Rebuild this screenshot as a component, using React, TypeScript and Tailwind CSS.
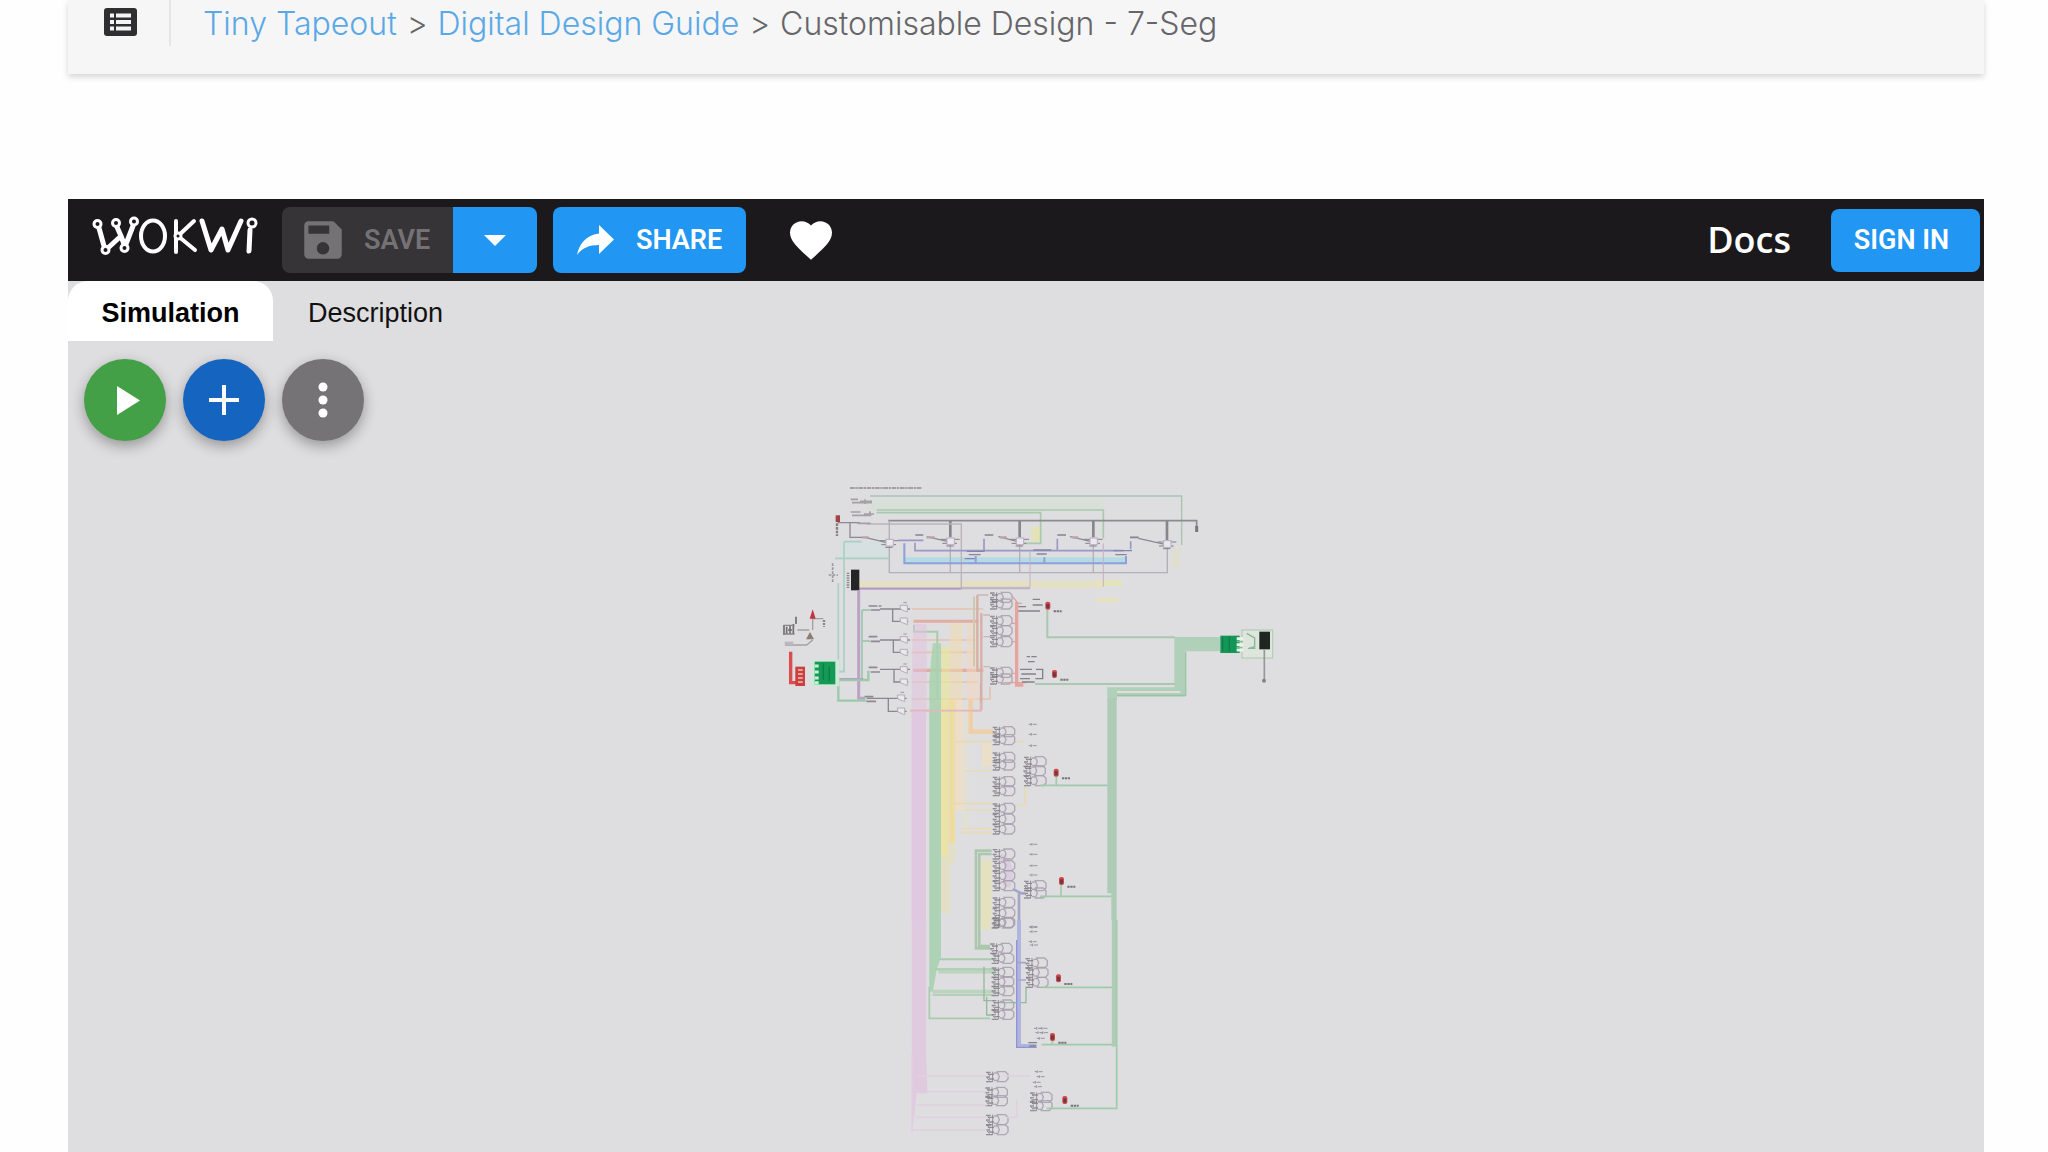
import React from 'react';

const INK = '#858189';
const LEAF = '#9fcbaa';

type Spot = [number, number];

function Gates({ spots }: { spots: Spot[] }) {
  return (
    <>
      {spots.map(([x, y]) => (
        <g key={`${x}-${y}`} transform={`translate(${x} ${y})`} fill="none" stroke={INK} strokeOpacity="0.85">
          <path d="M0 4h14M6 10h18M0 18h12M8 24h16M0 32h20" strokeWidth="4" />
          <path d="M20 2v30M5 6l6 8M3 20l7 9" strokeWidth="3" />
          <path d="M24 6h12M24 28h10M34 2h24l8 8v14l-8 8H34l6-15z" strokeWidth="4" stroke="#a79dae" />
        </g>
      ))}
    </>
  );
}

function Leds({ spots }: { spots: Spot[] }) {
  return (
    <>
      {spots.map(([x, y]) => (
        <g key={`${x}-${y}`}>
          <rect x={x - 7} y={y - 12} width="15" height="24" rx="6" fill="#d0484d" />
          <rect x={x - 4} y={y - 5} width="9" height="13" fill="#6f3a3c" />
          <path d={`M${x + 18} ${y + 17}h24`} stroke="#77757a" strokeWidth="6" strokeDasharray="7 2" />
        </g>
      ))}
    </>
  );
}

function Notes({ spots }: { spots: Spot[] }) {
  return (
    <>
      {spots.map(([x, y]) => (
        <path key={`${x}-${y}`} d={`M${x} ${y}h8m4 0h12M${x + 8} ${y - 4}v8`} stroke="#98959c" strokeWidth="3" fill="none" />
      ))}
    </>
  );
}

function Counter({ x, y }: { x: number; y: number }) {
  return (
    <g transform={`translate(${x} ${y})`} fill="none" stroke={INK} strokeWidth="3">
      <path d="M-28 -6h56M-24 6h44" />
      <rect x="-10" y="-10" width="22" height="20" fill="#ece7f0" stroke="#b7aebf" />
      <path d="M-12 14h22" />
    </g>
  );
}

function Circuit() {
  return (
    <svg className="h-[672px] w-[520px] shrink-0" viewBox="766 480 520 672" role="img" aria-label="Seven segment circuit diagram">
      <g transform="translate(770 480) scale(0.33333)" fill="none">
        {/* tinted bus backgrounds */}
        <path d="M290 60H1000V88H290z" fill="#d8dfd6" />
        <path d="M403 232H1068V250H403z" fill="#b4dbe5" />
        <path d="M210 185H358V235H210z" fill="#d6e0e0" />
        <path d="M265 302H1000V324H265z" fill="#e3e0c4" />
        <path d="M785 140H812V185H785z" fill="#e3e3b5" />
        <path d="M980 300h76v18h-76zM980 355h66v12h-66z" fill="#e4e3bb" />
        <path d="M1205 205h26v60h-26z" fill="#dfdfcf" />

        {/* register row */}
        <path d="M240 24H455" stroke="#8e8c90" strokeWidth="4" strokeDasharray="14 2 7 2" />
        <path d="M300 48H1235V195" stroke="#a9c5b0" strokeWidth="4" />
        <path d="M320 90H1000V175M320 98H812V190H765" stroke="#a8c9ae" strokeWidth="5" />
        <path d="M355 122H1280V148" stroke="#8b8a8f" strokeWidth="5" />
        <path d="M541 122V172M749 122V172M970 122V172M1191 122V180" stroke="#88868d" strokeWidth="8" />
        <path d="M1280 138v18" stroke="#7a787e" strokeWidth="9" />
        <path d="M358 122V278H1192V190M541 180V278M749 180V278M970 180V278" stroke="#b3b0b6" strokeWidth="4" />
        <path d="M290 132H574V326" stroke="#b9b4b8" strokeWidth="4" />
        <path d="M203 128H270M240 128V172H280M285 172l65 16M470 170l65 15M685 170l60 15M900 170l65 15M1105 175l80 18" stroke="#8c8991" strokeWidth="4" />
        <path d="M385 181H460M435 188V212H1060M642 176V212M862 176V212M1082 184V208" stroke="#9a98c6" strokeWidth="5" />
        <path d="M403 190V250H1068V228M617 228V250M823 232V250" stroke="#8f9fd8" strokeWidth="6" />
        <path d="M436 165h24M644 165h26M862 165h26M1080 172h26" stroke="#87848c" strokeWidth="5" />
        <path d="M590 214h54M596 224h36M790 210h54M800 222h30M1030 212h56M1036 224h34M584 236h30" stroke="#8884a8" strokeWidth="4" />
        <path d="M780 212V322H575M1000 190V320" stroke="#c3b2c4" strokeWidth="3" />
        <Counter x={358} y={188} />
        <Counter x={541} y={184} />
        <Counter x={749} y={184} />
        <Counter x={970} y={184} />
        <Counter x={1191} y={192} />
        <path d="M242 58h22m6 6h36M246 68h60M242 96h30m10 6h30M246 106h58M262 130h40M285 58v14M300 94v14" stroke="#a4a1a7" strokeWidth="5" />
        <path d="M470 172h24M690 172h20M905 172h20M276 172h20" stroke="#b8a3ac" strokeWidth="7" />
        <rect x="197" y="106" width="13" height="20" fill="#a24146" />
        <path d="M201 130v38" stroke="#827f85" strokeWidth="7" strokeDasharray="8 3" />

        {/* clock and chip */}
        <path d="M265 326H575" stroke="#b59ac6" strokeWidth="7" />
        <path d="M575 326H780" stroke="#c3b2c4" strokeWidth="4" />
        <path d="M358 235H195M222 185V575H205M275 185H222M205 310V575" stroke="#a9d0c3" strokeWidth="5" />
        <path d="M188 250v60M176 285h28" stroke="#9b989e" strokeWidth="5" strokeDasharray="8 4" />
        <rect x="243" y="269" width="25" height="62" fill="#242326" />
        <path d="M234 278v48" stroke="#8b888e" strokeWidth="8" strokeDasharray="4 3" />
        <path d="M266 330V655H285" stroke="#b9a3c6" strokeWidth="9" />
        <path d="M276 390V600M300 390H276M300 483H276" stroke="#a7c9b4" strokeWidth="6" />
        <path d="M205 600H295V572M205 600V662H290" stroke="#9ccaab" strokeWidth="7" />
        <path d="M205 596H280" stroke="#b3a3c0" strokeWidth="4" />

        {/* switches and input board */}
        <path d="M42 435v30M50 440v22M60 438v24M70 432v30M54 450h12M78 410v22" stroke="#716e72" strokeWidth="5" />
        <path d="M40 436h34M40 462h34" stroke="#8a878c" strokeWidth="4" />
        <path d="M82 450H118M128 410V450M128 416H160M45 495H110L128 480" stroke="#a5a0a4" strokeWidth="4" />
        <path d="M162 420v20" stroke="#88858a" strokeWidth="7" strokeDasharray="6 3" />
        <path d="M108 478l12-22 12 22z" fill="#8b7c74" />
        <path d="M128 388l9 28h-18z" fill="#c2353a" />
        <path d="M44 490h26" stroke="#bcb7bc" strokeWidth="10" />
        <path d="M62 515V608H78" stroke="#dc4b4e" strokeWidth="10" />
        <rect x="76" y="560" width="29" height="58" fill="#cc3f40" />
        <path d="M84 570h14M84 582h14M84 594h14M84 606h14" stroke="#f0c5ae" strokeWidth="5" />
        <rect x="124" y="539" width="84" height="80" fill="#cfe9d8" />
        <rect x="134" y="545" width="62" height="68" fill="#149a55" />
        <path d="M134 558h12M134 576h12M134 594h12M134 608h12" stroke="#c8f0d8" strokeWidth="9" />
        <path d="M160 550v50M178 560v45" stroke="#0b7f45" strokeWidth="4" />

        {/* input buffers */}
        <path d="M330 387H420M368 387V424H415M330 480H420M370 480V517H415M330 568H420M372 568V606H415M290 655H410M355 655V694H410" stroke="#8a878d" strokeWidth="4" />
        <path d="M296 378h26m4 0h8M302 390h28M296 470h26M302 484h28M296 562h26M302 576h28M284 650h26M290 664h28" stroke="#8c8990" strokeWidth="5" />
        <path d="M390 376h22v20l-20-8zM390 414h22v20l-20-8zM390 470h22v20l-20-8zM390 508h22v20l-20-8zM390 560h22v20l-20-8zM390 597h22v20l-20-8zM382 645h22v20l-20-8zM382 684h22v20l-20-8z" fill="#ebe8ec" stroke="#b3afb6" strokeWidth="3" />
        <path d="M400 368h10M400 462h10M400 552h10M392 637h10" stroke="#9b98a0" strokeWidth="3" />
        <path d="M425 387H640M425 480H620M425 517H620M425 606H625M425 657H660V620" stroke="#e4c2b0" strokeWidth="5" />
        <path d="M430 424H625" stroke="#e2ada2" strokeWidth="9" />
        <path d="M430 571H640" stroke="#e3a9a2" strokeWidth="10" />
        <path d="M425 692H632V610" stroke="#dfb1b9" strokeWidth="5" />
        <path d="M432 435V455H502V660" stroke="#a7ccad" strokeWidth="6" />

        {/* vertical buses, upper part */}
        <path d="M430 432H470V700H425V600z" fill="#e1c2dd" fillOpacity="0.55" />
        <path d="M488 490H513V700H478V600z" fill="#a9d2b0" fillOpacity="0.85" />
        <path d="M514 500H540V662H514z" fill="#e9e59f" fillOpacity="0.7" />
        <path d="M540 430H578V662H540z" fill="#f1dcad" fillOpacity="0.55" />
        <path d="M590 430H625V662H590z" fill="#f1d9c2" fillOpacity="0.6" />
        <path d="M622 345V575M634 400V690" stroke="#d6aea4" strokeWidth="7" />
        <path d="M612 350V560" stroke="#cfc9b0" strokeWidth="6" />
        <path d="M622 345H655M640 405H660M640 470H660M640 560H660" stroke="#cdb5b2" strokeWidth="4" />
        <Gates spots={[[660, 335], [660, 355], [660, 405], [660, 435], [660, 468], [660, 560], [660, 580]]} />
        <path d="M740 366V615H760" stroke="#e7a39e" strokeWidth="10" />
        <path d="M740 370H755M728 350L744 370M725 430H738M725 485H738M722 580H738M700 608H770" stroke="#d9a5a3" strokeWidth="4" />
        <path d="M745 380H768M745 393H810M788 358h22M788 375h30M750 568h36M754 582h44M750 596h30M756 606h38M798 568h20v28h-22M770 530h10m4 0h16M774 545h20" stroke={INK} strokeWidth="4" />
        <path d="M832 390V472H1215M795 612H1215" stroke="#a8c8b0" strokeWidth="6" />
        <Leds spots={[[833, 377], [853, 582]]} />

        {/* output bus */}
        <path d="M1350 471H1213V622H1012V662H1041V650H1247V514H1350z" fill="#b1d0b9" />
        <path d="M1041 636H1232" stroke="#dcdfdc" strokeWidth="6" />
        <path d="M1041 646H1247V516" stroke="#98c4a5" strokeWidth="4" />
        <g transform="translate(990 300)">
          <rect x="426" y="150" width="92" height="84" fill="#dde5dd" stroke="#b9cdbb" strokeWidth="4" />
          <rect x="361" y="167" width="58" height="52" fill="#159659" />
          <path d="M368 172v40M388 170v44" stroke="#0d7f47" strokeWidth="4" />
          <path d="M410 176h20M410 194h20M410 210h20" stroke="#e6f6ea" strokeWidth="9" />
          <path d="M410 185h18M410 203h16M440 160l24 14v26l-20 6M450 205h16" stroke="#88b793" strokeWidth="4" />
          <rect x="478" y="155" width="32" height="53" fill="#1f261f" />
          <path d="M493 208V298" stroke="#99979b" strokeWidth="5" />
          <circle cx="492" cy="302" r="6" fill="#858288" />
        </g>

        {/* decoder, middle part */}
        <g transform="translate(360 660)">
          <path d="M65 30H108V660H65z" fill="#e0c8e0" />
          <path d="M118 30H153V660H118z" fill="#aed2b5" />
          <path d="M153 0H174V470H153z" fill="#eae3a8" />
          <path d="M176 0H195V430H176z" fill="#eedd9c" />
          <path d="M198 0H216V330H198z" fill="#efddc6" />
          <path d="M153 470H180V640H153zM176 430H195V490H176z" fill="#e3dfc4" />
          <path d="M216 20H236V400H216z" fill="#e1dfd6" />
          <path d="M242 0V95H310" stroke="#efd0a6" strokeWidth="14" />
          <path d="M60 32H272V5" stroke="#e1b9bc" strokeWidth="5" />
          <path d="M275 130H305V200H275z" fill="#efe0bd" fillOpacity="0.7" />
          <path d="M200 125H305M225 213H305M180 310H305M225 330H305M215 398H305M215 386H305M375 125H405M375 315H405V255" stroke="#e6dbb4" strokeWidth="5" />
          <path d="M272 480H305V660H272z" fill="#e4e1c0" />
          <path d="M305 452H258V660M305 462H268V660" stroke="#acc7ae" strokeWidth="8" />
          <path d="M330 470q40 20 20 90" stroke="#d5bbdc" strokeWidth="22" strokeOpacity="0.45" />
          <Gates spots={[[308, 78], [308, 102], [308, 155], [308, 178], [308, 228], [308, 255], [308, 308], [308, 340], [308, 370], [308, 445], [308, 480], [308, 510], [308, 540], [308, 590], [308, 622], [308, 650]]} />
          <Gates spots={[[402, 168], [400, 195], [402, 225], [402, 540], [402, 562]]} />
          <Notes spots={[[416, 73], [416, 103], [416, 137], [418, 433], [418, 463], [418, 497], [418, 525], [418, 682]]} />
          <path d="M450 256H655M450 589H665M499 230V256M513 555V589" stroke={LEAF} strokeWidth="5" />
          <path d="M370 568L395 580H405M387 580V680" stroke="#a4a5c8" strokeWidth="8" />
          <Leds spots={[[498, 218], [514, 543]]} />
        </g>
        <path d="M1012 655H1040V1320H1024V1240H1012z" fill="#aeccb5" />

        {/* decoder, lower part */}
        <g transform="translate(360 1320)">
          <path d="M65 0H108V400L112 520H80L66 640z" fill="#e0cae0" />
          <path d="M118 0H153V110L140 150L128 215H118z" fill="#aed2b5" />
          <path d="M258 0V85H300M268 0V78H300" stroke="#acc7ae" strokeWidth="8" />
          <path d="M272 0H300V30H272z" fill="#e4e1c0" />
          <path d="M148 118H320M136 148H320" stroke="#a9cbaf" strokeWidth="6" />
          <path d="M145 155H320M128 215H320" stroke="#bad4bd" strokeWidth="11" />
          <path d="M118 200V295H300M128 225H310" stroke="#a8cbae" strokeWidth="5" />
          <path d="M282 140V242H305M290 230V285H310M330 248H408V200" stroke="#95b99c" strokeWidth="4" />
          <Gates spots={[[305, -8], [300, 68], [305, 98], [305, 140], [305, 168], [305, 195], [305, 238], [305, 266], [288, 453], [286, 500], [286, 525], [288, 582], [288, 612]]} />
          <Gates spots={[[406, 112], [408, 140], [408, 170], [420, 515], [420, 540]]} />
          <path d="M387 0V378H440" stroke="#b0b5df" strokeWidth="12" />
          <path d="M380 60V382H440" stroke="#8f95d2" strokeWidth="4" />
          <path d="M380 128H408M380 180H408" stroke="#a4a5c8" strokeWidth="5" />
          <Notes spots={[[418, 20], [418, 35], [416, 65], [420, 75], [434, 455], [440, 470], [428, 487], [432, 500], [432, 325], [448, 325], [436, 338], [450, 338], [440, 355]]} />
          <path d="M415 368h26M418 378h20" stroke={INK} strokeWidth="4" />
          <path d="M455 202H668M455 374H675M470 565H680V0M487 360V374" stroke={LEAF} strokeWidth="5" />
          <path d="M672 0V380" stroke="#aeccb5" strokeWidth="13" />
          <path d="M80 468H290M110 515H290M80 555H290M80 592H290M65 630H290M66 640V400M340 468H420M350 592H380V540" stroke="#e0cfe1" strokeWidth="4" />
          <Leds spots={[[505, 175], [487, 351], [524, 540]]} />
        </g>
      </g>
    </svg>
  );
}

function Logo() {
  return (
    <svg className="h-10 w-[168px]" viewBox="0 0 168 40" fill="none" stroke="#fff" strokeWidth="4" strokeLinecap="round" strokeLinejoin="round" role="img" aria-label="Wokwi">
      <path d="M7 12L12 30M17 31L29 20L25 11M29 20L32 28M34 28L41 10" strokeWidth="5" />
      <g strokeWidth="3" fill="#1b191c">
        <circle cx="5.500" cy="8" r="3.500" />
        <circle cx="24" cy="7" r="3.500" />
        <circle cx="42" cy="5.500" r="3.500" />
        <circle cx="13.500" cy="34" r="3.500" />
        <circle cx="32.500" cy="32" r="3.500" />
      </g>
      <ellipse cx="61" cy="20" rx="12" ry="15.500" />
      <path d="M84 5V36M102 5L86 20L103 34" />
      <path d="M110 5L119 34L130 13L136 34L149 5M158 14L157 35" strokeWidth="5" />
      <circle cx="86" cy="20" r="3" fill="#1b191c" strokeWidth="3" />
      <circle cx="160" cy="7" r="4" strokeWidth="3" />
    </svg>
  );
}

const round = 'flex size-[82px] items-center justify-center rounded-full text-white shadow-[0_5px_14px_rgba(0,0,0,0.32)]';

export default function App() {
  return (
    <div className="flex min-h-screen flex-col bg-[#fefefe] pl-[68px] pr-16">
      <header className="flex h-[74px] items-start bg-[#f6f6f7] shadow-[0_3px_6px_rgba(0,0,0,0.16)]">
        <button type="button" aria-label="Contents" className="ml-9 mt-2 h-7 w-[33px]">
          <svg viewBox="0 0 33 28" className="h-7 w-[33px]">
            <rect width="33" height="28" rx="3" fill="#2f2f31" />
            <path d="M6 7.500h4M12 7.500h15M6 14h4M12 14h15M6 20.500h4M12 20.500h15" stroke="#f4f4f4" strokeWidth="4" />
          </svg>
        </button>
        <div className="ml-8 h-[46px] w-0.5 bg-[#e6e6e8]" />
        <nav aria-label="Breadcrumb" className="ml-8 flex gap-2.5 whitespace-nowrap font-['Inter',sans-serif] text-[32px] font-light leading-[48px] text-[#66666a]">
          <a href="#tiny-tapeout" className="text-[#5ba8e6]">Tiny Tapeout</a>
          <span>&gt;</span>
          <a href="#guide" className="text-[#5ba8e6]">Digital Design Guide</a>
          <span>&gt;</span>
          <span>Customisable Design - 7-Seg</span>
        </nav>
      </header>

      <main className="mt-[125px] flex flex-1 flex-col bg-[#dedddf]">
        <div className="flex h-[82px] items-center bg-[#1b191c] pl-6 pr-1 font-['Roboto',sans-serif] text-[27px] font-semibold text-white">
          <a href="#wokwi" className="mb-2"><Logo /></a>
          <div className="ml-[22px] flex h-[66px] overflow-hidden rounded-lg">
            <button type="button" disabled className="flex w-[171px] items-center bg-[#373437] pl-4 text-[#747275]">
              <svg viewBox="0 0 24 24" className="size-[50px]" fill="currentColor">
                <path d="M17 3H5a2 2 0 0 0-2 2v14a2 2 0 0 0 2 2h14a2 2 0 0 0 2-2V7zm-5 16a3 3 0 1 1 0-6 3 3 0 0 1 0 6zm3-10H5V5h10z" />
              </svg>
              <span className="ml-4">SAVE</span>
            </button>
            <button type="button" aria-label="More save options" className="flex w-[84px] items-center justify-center bg-[#2196f3]">
              <svg viewBox="0 0 22 11" className="h-[11px] w-[22px]" fill="#fff"><path d="M0 0h22L11 11z" /></svg>
            </button>
          </div>
          <button type="button" className="ml-4 flex h-[66px] w-[193px] items-center rounded-lg bg-[#2196f3] pl-6">
            <svg viewBox="0 0 37 30" className="h-[30px] w-[37px]" fill="#fff">
              <path d="M37 14.500L22 0v8.500C8 10.500 2 20 0 30c5-7 12-10 22-10v9z" />
            </svg>
            <span className="ml-[22px]">SHARE</span>
          </button>
          <button type="button" aria-label="Like" className="ml-11">
            <svg viewBox="2 3 20 18.350" className="h-[39px] w-[42px]" fill="#fff">
              <path d="M12 21.350l-1.450-1.320C5.400 15.360 2 12.280 2 8.500 2 5.420 4.420 3 7.500 3c1.740 0 3.410.81 4.500 2.090C13.090 3.810 14.760 3 16.500 3 19.580 3 22 5.420 22 8.500c0 3.780-3.400 6.860-8.550 11.540z" />
            </svg>
          </button>
          <a href="#docs" className="ml-auto font-['Open_Sans',sans-serif] text-[36px] font-semibold">Docs</a>
          <button type="button" className="ml-10 h-[63px] w-[149px] rounded-lg bg-[#2196f3] pr-2">SIGN IN</button>
        </div>

        <div role="tablist" className="flex h-[60px] font-['Liberation_Sans',sans-serif] text-[27px] text-[#111]">
          <button type="button" role="tab" aria-selected="true" className="w-[205px] rounded-t-[20px] bg-white pt-1 font-bold text-black">Simulation</button>
          <button type="button" role="tab" aria-selected="false" className="w-[205px] pt-1">Description</button>
        </div>

        <div className="mt-[18px] flex gap-[17px] pl-4">
          <button type="button" aria-label="Start simulation" className={`${round} bg-[#43a047]`}>
            <svg viewBox="0 0 23 29" className="ml-1.5 h-[29px] w-[23px]" fill="#fff"><path d="M0 0l23 14.500L0 29z" /></svg>
          </button>
          <button type="button" aria-label="Add part" className={`${round} bg-[#1565c0]`}>
            <svg viewBox="0 0 30 30" className="size-[30px]" fill="none" stroke="#fff" strokeWidth="4"><path d="M15 0v30M0 15h30" /></svg>
          </button>
          <button type="button" aria-label="More" className={`${round} bg-[#757376]`}>
            <svg viewBox="0 0 10 36" className="h-9 w-2.5" fill="#fff">
              <circle cx="5" cy="5" r="4.500" /><circle cx="5" cy="18" r="4.500" /><circle cx="5" cy="31" r="4.500" />
            </svg>
          </button>
        </div>

        <div className="mt-[39px] flex justify-center"><Circuit /></div>
      </main>
    </div>
  );
}
